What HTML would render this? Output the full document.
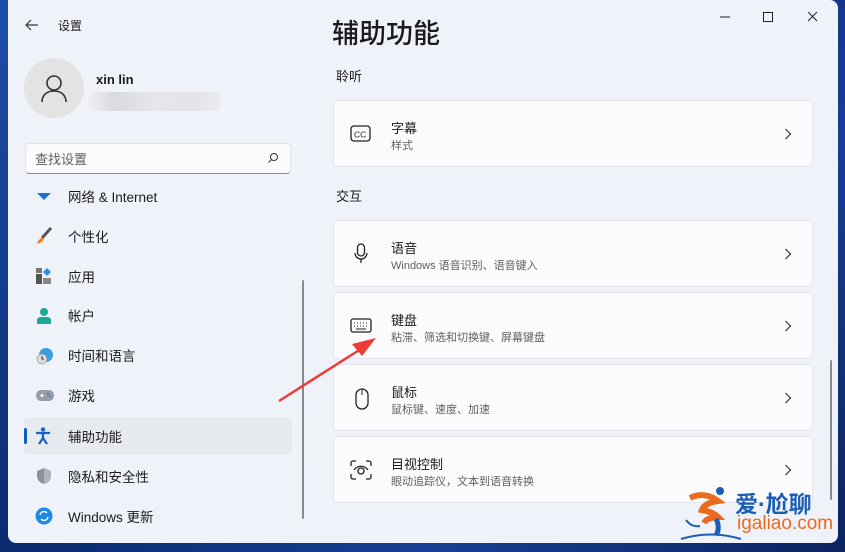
<!DOCTYPE html>
<html><head><meta charset="utf-8"><style>
*{margin:0;padding:0;box-sizing:border-box}
body{width:845px;height:552px;overflow:hidden;background:linear-gradient(135deg,#1d4fa8,#0a2a6e 40%,#173f95 70%,#0b2460);font-family:"Liberation Sans","Noto Sans CJK SC",sans-serif;position:relative}
.win{position:absolute;left:8px;top:0;width:830px;height:543px;background:#eff3f9;border-radius:0 8px 8px 8px}
.t{position:absolute;white-space:nowrap;color:#1b1b1b}
.card{position:absolute;left:333px;width:480px;background:#fbfbfd;border:1px solid #e3e5ea;border-radius:5px}
.card .ti{position:absolute;left:57px;font-size:13px;color:#1b1b1b}
.card .su{position:absolute;left:57px;font-size:11px;color:#606060}
.card .ch{position:absolute;right:20px;top:50%;margin-top:-6px}
.nav{position:absolute;left:68px;font-size:13.5px;color:#1b1b1b}
.ic{position:absolute}
</style></head><body>
<div class="win"></div>
<svg class="ic" style="left:24px;top:18px" width="16" height="14"><path d="M14 7H2M7 2L2 7l5 5" stroke="#333" stroke-width="1.2" fill="none"/></svg>
<div class="t" style="left:58px;top:17px;font-size:12px">设置</div>
<svg class="ic" style="left:718px;top:10px" width="110" height="16"><path d="M2 7h10" stroke="#222" stroke-width="1"/><rect x="45.5" y="2.5" width="9" height="9" fill="none" stroke="#222"/><path d="M90 2l9 9M99 2l-9 9" stroke="#222"/></svg>
<div style="position:absolute;left:24px;top:58px;width:60px;height:60px;border-radius:50%;background:#e3e3e3"></div>
<svg class="ic" style="left:38px;top:72px" width="32" height="32"><circle cx="16" cy="11" r="7" fill="none" stroke="#333" stroke-width="1.6"/><path d="M4 30c0-7 5-11 12-11s12 4 12 11" fill="none" stroke="#333" stroke-width="1.6"/></svg>
<div class="t" style="left:96px;top:72px;font-size:13px;font-weight:bold">xin lin</div>
<div style="position:absolute;left:88px;top:92px;width:132px;height:19px;background:linear-gradient(90deg,#eef0f3,#d9dadd 20%,#e6e7ea 50%,#e2e3e6 80%,#ebecef);border-radius:4px"></div>
<div style="position:absolute;left:25px;top:143px;width:266px;height:31px;background:#fbfbfd;border:1px solid #e0e2e6;border-bottom:1px solid #8a8a8a;border-radius:4px"></div>
<div class="t" style="left:35px;top:149px;font-size:13px;color:#5e5e5e">查找设置</div>
<svg class="ic" style="left:267px;top:152px" width="12" height="12"><circle cx="7" cy="5" r="3.5" fill="none" stroke="#333"/><path d="M4.5 7.5L1.5 10.5" stroke="#333"/></svg>
<svg class="ic" style="left:36px;top:192px" width="16" height="10"><path d="M1 1h14L8 8z" fill="#1a73c8"/></svg>
<div class="nav" style="top:186px">网络 &amp; Internet</div>
<svg class="ic" style="left:35px;top:227px" width="18" height="18"><path d="M16 1L7 11" stroke="#555" stroke-width="3"/><path d="M7 10l-4 4 -1 3 5-2 2-3z" fill="#f07b2e"/></svg>
<div class="nav" style="top:226px">个性化</div>
<svg class="ic" style="left:36px;top:268px" width="16" height="16"><rect x="0" y="6" width="6" height="10" fill="#555"/><rect x="7" y="10" width="8" height="6" fill="#888"/><rect x="0" y="0" width="6" height="5" fill="#777"/><path d="M11 0l4 4-4 4-4-4z" fill="#2d8de0"/></svg>
<div class="nav" style="top:266px">应用</div>
<svg class="ic" style="left:36px;top:307px" width="16" height="18"><circle cx="8" cy="5" r="4" fill="#1aa998"/><path d="M1 17v-4c0-2 2-3 4-3h6c2 0 4 1 4 3v4z" fill="#1aa998"/></svg>
<div class="nav" style="top:305px">帐户</div>
<svg class="ic" style="left:36px;top:347px" width="18" height="18"><circle cx="10" cy="8" r="7" fill="#3a9ee0"/><circle cx="6" cy="12" r="5" fill="#ddd" stroke="#888" stroke-width=".6"/><path d="M6 9v3h2" stroke="#333" fill="none"/></svg>
<div class="nav" style="top:345px">时间和语言</div>
<svg class="ic" style="left:36px;top:390px" width="18" height="12"><rect x="0" y="0" width="18" height="11" rx="5" fill="#9a9ea4"/><path d="M4 5.5h4M6 3.5v4" stroke="#fff"/><circle cx="12" cy="4" r="1" fill="#2a72d0"/><circle cx="14" cy="6.5" r="1" fill="#2a72d0"/></svg>
<div class="nav" style="top:385px">游戏</div>
<div style="position:absolute;left:24px;top:418px;width:268px;height:36px;background:#e7eaef;border-radius:4px"></div>
<div style="position:absolute;left:24px;top:428px;width:3px;height:16px;background:#0b5cc4;border-radius:2px"></div>
<svg class="ic" style="left:35px;top:427px" width="16" height="18"><circle cx="8" cy="2.5" r="2.2" fill="#1464c8"/><path d="M1 6h14M8 6v5M8 11l-4 6M8 11l4 6" stroke="#1464c8" stroke-width="2.2"/></svg>
<div class="nav" style="top:426px">辅助功能</div>
<svg class="ic" style="left:36px;top:467px" width="16" height="18"><path d="M8 1l7 3v5c0 4-3 7-7 8-4-1-7-4-7-8V4z" fill="#8d9299"/><path d="M8 1l7 3v5c0 4-3 7-7 8z" fill="#b0b4ba"/></svg>
<div class="nav" style="top:466px">隐私和安全性</div>
<svg class="ic" style="left:35px;top:507px" width="18" height="18"><circle cx="9" cy="9" r="8.5" fill="#1c8ae0"/><path d="M5 8a4 4 0 017-2M13 10a4 4 0 01-7 2" stroke="#fff" stroke-width="1.4" fill="none"/></svg>
<div class="nav" style="top:506px">Windows 更新</div>
<div style="position:absolute;left:302px;top:280px;width:2px;height:239px;background:#8a8a8a;border-radius:1px"></div>
<div class="t" style="left:332px;top:12px;font-size:27px;font-weight:500">辅助功能</div>
<div class="t" style="left:336px;top:66px;font-size:13px">聆听</div>
<div class="card" style="top:100px;height:67px">
<svg class="ic" style="left:16px;top:24px" width="22" height="18"><rect x="1" y="1" width="19" height="15" rx="3" fill="none" stroke="#222" stroke-width="1.3"/><text x="4" y="12.5" font-size="8.5" font-family="Liberation Sans" fill="#222">CC</text></svg>
<div class="ti" style="top:17px">字幕</div><div class="su" style="top:36px">样式</div>
<svg class="ch" width="8" height="12"><path d="M1.5 1l5 5-5 5" stroke="#333" fill="none" stroke-width="1.2"/></svg></div>
<div class="t" style="left:336px;top:186px;font-size:13px">交互</div>
<div class="card" style="top:220px;height:67px">
<svg class="ic" style="left:20px;top:22px" width="14" height="22"><rect x="3.5" y="1" width="7" height="12" rx="3.5" fill="none" stroke="#222" stroke-width="1.3"/><path d="M1 10a6 6 0 0012 0M7 16v4" stroke="#222" stroke-width="1.3" fill="none"/></svg>
<div class="ti" style="top:17px">语音</div><div class="su" style="top:36px">Windows 语音识别、语音键入</div>
<svg class="ch" width="8" height="12"><path d="M1.5 1l5 5-5 5" stroke="#333" fill="none" stroke-width="1.2"/></svg></div>
<div class="card" style="top:292px;height:67px">
<svg class="ic" style="left:16px;top:25px" width="22" height="15"><rect x="1" y="1" width="20" height="13" rx="2" fill="none" stroke="#222" stroke-width="1.3"/><path d="M4 5h1M7 5h1M10 5h1M13 5h1M16 5h1M4 8h1M7 8h1M10 8h1M13 8h1M16 8h1M6 11h10" stroke="#222"/></svg>
<div class="ti" style="top:17px">键盘</div><div class="su" style="top:36px">粘滞、筛选和切换键、屏幕键盘</div>
<svg class="ch" width="8" height="12"><path d="M1.5 1l5 5-5 5" stroke="#333" fill="none" stroke-width="1.2"/></svg></div>
<div class="card" style="top:364px;height:67px">
<svg class="ic" style="left:21px;top:23px" width="14" height="22"><rect x="1" y="1" width="12" height="20" rx="6" fill="none" stroke="#222" stroke-width="1.3"/><path d="M7 1v6" stroke="#222"/></svg>
<div class="ti" style="top:17px">鼠标</div><div class="su" style="top:36px">鼠标键、速度、加速</div>
<svg class="ch" width="8" height="12"><path d="M1.5 1l5 5-5 5" stroke="#333" fill="none" stroke-width="1.2"/></svg></div>
<div class="card" style="top:436px;height:67px">
<svg class="ic" style="left:16px;top:23px" width="22" height="20"><path d="M1 6V3a2 2 0 012-2h3M16 1h3a2 2 0 012 2v3M21 14v3a2 2 0 01-2 2h-3M6 19H3a2 2 0 01-2-2v-3" stroke="#222" stroke-width="1.3" fill="none"/><path d="M4 10c4-5 10-5 14 0" stroke="#222" stroke-width="1.3" fill="none"/><circle cx="11" cy="11" r="3" fill="none" stroke="#222" stroke-width="1.3"/></svg>
<div class="ti" style="top:17px">目视控制</div><div class="su" style="top:36px">眼动追踪仪，文本到语音转换</div>
<svg class="ch" width="8" height="12"><path d="M1.5 1l5 5-5 5" stroke="#333" fill="none" stroke-width="1.2"/></svg></div>
<div style="position:absolute;left:830px;top:360px;width:2px;height:140px;background:#8a8a8a;border-radius:1px"></div>
<svg class="ic" style="left:276px;top:330px" width="105" height="75"><path d="M3 71L88 17" stroke="#ee3b35" stroke-width="2.5"/><path d="M100 8L76 14l10 12z" fill="#ee3b35"/></svg>
<svg class="ic" style="left:680px;top:485px" width="80" height="60"><path d="M10 13c10-5 20-3 28 3-8 1-14 4-16 9 6 1 12 3 16 7-6 0-12 2-14 6" stroke="#ec6a1e" stroke-width="6" fill="none"/><circle cx="40" cy="6" r="4" fill="#1a5db5"/><path d="M36 34c3 5 3 12 0 16" stroke="#1a5db5" stroke-width="5" fill="none"/><path d="M1 54c20-6 40-6 60 0" stroke="#1a5db5" stroke-width="2" fill="none"/><path d="M6 35c4 5 8 7 14 6" stroke="#1a5db5" stroke-width="2" fill="none"/></svg>
<div class="t" style="left:735px;top:485px;font-size:23px;color:#1a5db5;font-weight:bold">爱·尬聊</div>
<div class="t" style="left:737px;top:513px;font-size:19px;color:#ec6a1e">igaliao.com</div>
</body></html>
